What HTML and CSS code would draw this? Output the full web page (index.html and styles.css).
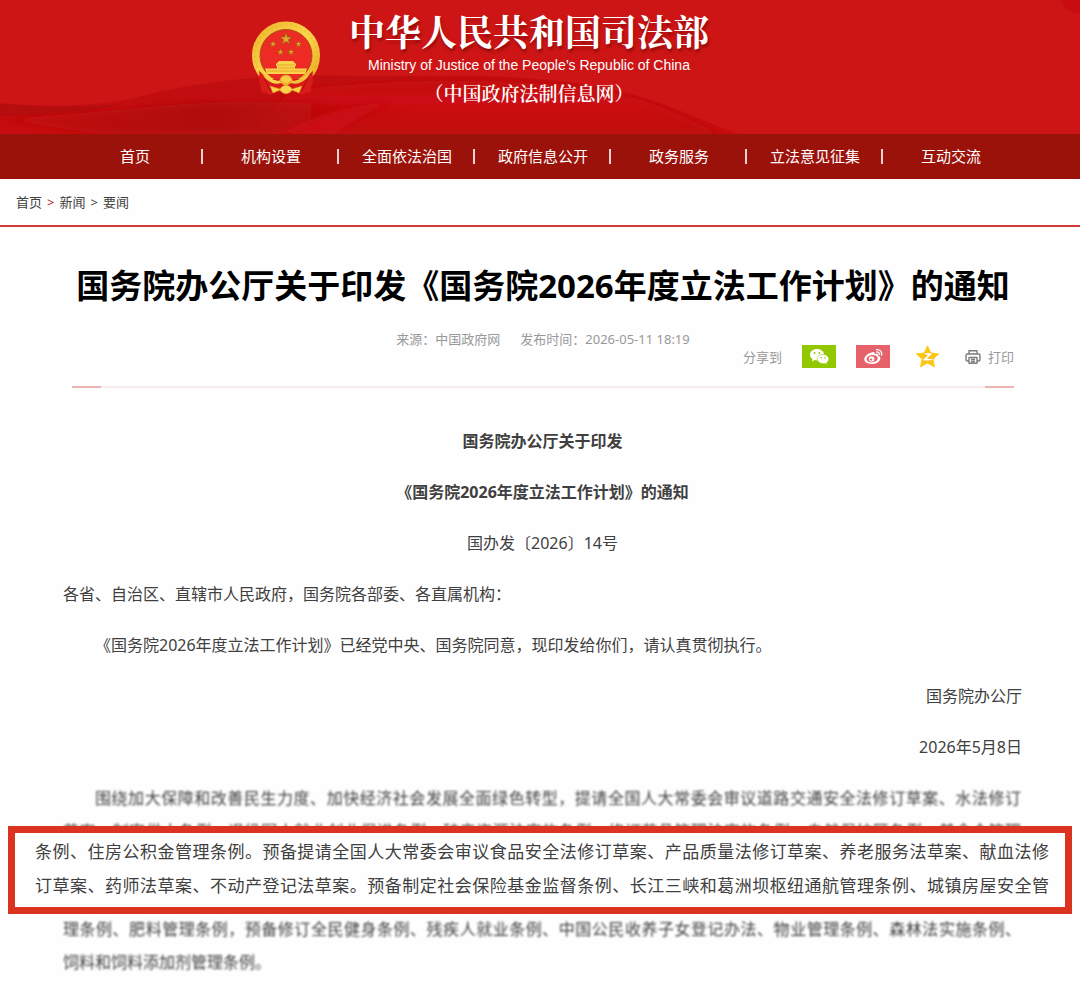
FILE: index.html
```html
<!DOCTYPE html>
<html lang="zh-CN">
<head>
<meta charset="utf-8">
<meta name="viewport" content="width=device-width, initial-scale=1">
<title>国务院办公厅关于印发《国务院2026年度立法工作计划》的通知</title>
<link rel="stylesheet" href="styles.css">
</head>
<body>
<header class="banner">
  <svg class="banner-waves" viewBox="0 0 1080 134" preserveAspectRatio="none" aria-hidden="true">
    <defs>
      <linearGradient id="wave" x1="0" y1="0" x2="0" y2="1">
        <stop offset="0" stop-color="#bf0e11"/>
        <stop offset="1" stop-color="#c60c0e"/>
      </linearGradient>
      <linearGradient id="fold" x1="0" y1="0" x2="1" y2="0">
        <stop offset="0" stop-color="#c30c0f"/>
        <stop offset="0.5" stop-color="#b00d0c"/>
        <stop offset="1" stop-color="#b80c0d" stop-opacity="0"/>
      </linearGradient>
      <linearGradient id="sheen" x1="0" y1="0" x2="0" y2="1">
        <stop offset="0" stop-color="#c50e11"/>
        <stop offset="0.4" stop-color="#cc0f12"/>
        <stop offset="1" stop-color="#c00b0d"/>
      </linearGradient>
      <filter id="soft"><feGaussianBlur stdDeviation="3"/></filter>
    </defs>
    <path d="M0 103C60 108 105 106 150 94C215 78 290 73 370 76H485C560 78 620 88 660 103C690 114 715 126 740 134H0Z" fill="url(#wave)"/>
    <path d="M0 104C50 107 90 107 120 104C90 114 40 116 0 116Z" fill="#b40e0f"/>
    <path d="M290 92C350 82 420 81 480 81C560 82 620 92 652 104C685 116 700 126 722 134H250Z" fill="url(#sheen)" filter="url(#soft)"/>
    <path d="M0 119C80 116 150 104 230 102C290 101 340 104 420 108C380 118 330 126 280 134H100Z" fill="url(#fold)" filter="url(#soft)"/>
    <path d="M280 134C310 118 340 106 390 102C360 116 345 126 335 134Z" fill="#cb1012" filter="url(#soft)"/>
    <path d="M1060 0C1066 9 1070 13 1080 14V0Z" fill="#c90c0f"/>
  </svg>
  <div class="brand">
    <svg class="emblem" viewBox="0 0 70 76" role="img" aria-label="国徽">
      <defs>
        <linearGradient id="gold" x1="0" y1="0" x2="1" y2="1">
          <stop offset="0" stop-color="#efb52d"/>
          <stop offset="0.5" stop-color="#fbd64c"/>
          <stop offset="1" stop-color="#e9a722"/>
        </linearGradient>
        <path id="star" d="M0-6.5 1.5-2H6.2L2.4.8 3.8 5.3 0 2.5-3.8 5.3-2.4.8-6.2-2H-1.5Z"/>
      </defs>
      <circle cx="35" cy="34.500" r="30" fill="#ed2a24" stroke="url(#gold)" stroke-width="8"/>
      <circle cx="35" cy="34.500" r="26" fill="none" stroke="#a95213" stroke-width="1"/>
      <circle cx="35" cy="34.500" r="31" fill="none" stroke="#e3a52c" stroke-width="2" stroke-dasharray="2 3" opacity="0.35"/>
      <g fill="#e2a52c" stroke="#91590e" stroke-width="0.700">
        <use href="#star" x="35" y="18"/>
        <use href="#star" transform="translate(22 23) scale(.55)"/>
        <use href="#star" transform="translate(47.500 23) scale(.55)"/>
        <use href="#star" transform="translate(29.500 31) scale(.55)"/>
        <use href="#star" transform="translate(40 31) scale(.55)"/>
      </g>
      <path d="M28 40H42L45 43V45H44V47.500H56L54 53H16L14 47.500H26V45H25V43Z" fill="#fbd24b"/>
      <path d="M26 44H44M16 50H54M27 47H43" stroke="#e09a22" stroke-width="0.800"/>
      <path d="M8 50C9 57 7 61 10 66 9 70 12 73 15 71 17 75 21 74 24 71H46C49 74 53 75 55 71 58 73 61 70 60 66 63 61 61 57 62 50L52 58H18Z" fill="#d91c1a"/>
      <path d="M13 58C17 62 16 66 20 70M57 58C53 62 54 66 50 70" fill="none" stroke="#a90e10" stroke-width="1"/>
      <path d="M9 49C14 55 21 59 28 60C30 54 40 54 42 60C49 59 56 55 61 49L56 57C51 62 45 64 40 62L35 65 30 62C25 64 19 62 14 57Z" fill="url(#gold)"/>
      <path d="M16 53H54L47 57 42 58C39 54 31 54 28 58L23 57Z" fill="#ed2a24"/>
      <path d="M29 60C29 56 32 54 35 54S41 56 41 60L35 63Z" fill="#f9cb43" stroke="#d78a1b" stroke-width="0.700"/>
      <path d="M19 65 29 68C32 63 38 63 41 68L51 65 48 72 41 69C38 74 32 74 29 69L22 72Z" fill="#fbd24b" stroke="#d9901d" stroke-width="0.500"/>
    </svg>
    <div class="brand-text">
      <div class="brand-name">中华人民共和国司法部</div>
      <div class="brand-en">Ministry of Justice of the People’s Republic of China</div>
      <div class="brand-sub">（中国政府法制信息网）</div>
    </div>
  </div>
</header>
<nav class="nav" aria-label="主导航">
  <a href="#">首页</a>
  <a href="#">机构设置</a>
  <a href="#">全面依法治国</a>
  <a href="#">政府信息公开</a>
  <a href="#">政务服务</a>
  <a href="#">立法意见征集</a>
  <a href="#">互动交流</a>
</nav>
<nav class="crumbs" aria-label="当前位置">
  <a href="#">首页</a><span class="crumb-mark">&gt;</span><a href="#">新闻</a><span>&gt;</span><a href="#">要闻</a>
</nav>
<main>
  <div class="article-head">
    <h1>国务院办公厅关于印发《国务院2026年度立法工作计划》的通知</h1>
    <div class="meta-row">
      <div class="meta"><span>来源：中国政府网</span><span>发布时间：2026-05-11 18:19</span></div>
      <div class="share">
        <span>分享到</span>
        <button class="tile wechat" type="button" aria-label="微信">
          <svg viewBox="0 0 34 23"><g fill="#fff"><path d="M15 4C10.900 4 8 6.600 8 9.800c0 1.800 1 3.300 2.500 4.300L10 16.500l2.600-1.400c.8.200 1.600.3 2.500.3 4 0 7-2.500 7-5.700C22 6.600 19 4 15 4Z"/><path d="M21 9.500c-3.300 0-5.700 2-5.700 4.600s2.400 4.600 5.700 4.600c.7 0 1.400-.1 2-.3l2.200 1.100-.5-1.900c1.400-.8 2.100-2.100 2.100-3.500 0-2.600-2.400-4.600-5.800-4.600Z" stroke="#92c800" stroke-width=".6"/></g><g fill="#92c800"><circle cx="12.500" cy="8" r="1"/><circle cx="17.300" cy="8" r="1"/><circle cx="19.200" cy="12.700" r=".8"/><circle cx="23" cy="12.700" r=".8"/></g></svg>
        </button>
        <button class="tile weibo" type="button" aria-label="微博">
          <svg viewBox="0 0 34 23"><path d="M15.500 7.500c1.500-.7 3.500-.8 3.300 1.500 2-.6 3.800-.3 3.200 1.800 1.600.5 2.700 1.400 2.300 3.200-.6 3-4.500 5-8.600 5-4.200 0-7.400-1.900-7.400-4.700 0-2.600 3.500-6.100 7.200-6.800Z" fill="#fff"/><ellipse cx="16.200" cy="13.700" rx="5.600" ry="3.700" fill="#e6626b" transform="rotate(-8 16 14)"/><circle cx="15.600" cy="14" r="2.800" fill="#fff"/><circle cx="15" cy="14.600" r="1.100" fill="#e6626b"/><path d="M20.500 4.700c3.400-.5 5.700 2 5 5.300M20.800 7c1.800-.1 2.700 1 2.400 2.600" fill="none" stroke="#fff" stroke-width="1.300" stroke-linecap="round"/></svg>
        </button>
        <button class="plain qzone" type="button" aria-label="QQ空间">
          <svg viewBox="0 0 24 23"><path d="M12 .5 15.300 7.800 23.500 8.800 17.500 14.200 19.200 22.300 12 18.200 4.800 22.300 6.500 14.200.5 8.800 8.700 7.800Z" fill="#fdc80b" stroke="#fdc80b" stroke-width="1" stroke-linejoin="round"/><path d="M7 8.400C11 7.300 14 7.400 17.500 8.400L12 13.400C14.500 14 17 13.900 20 13 16 16.200 11.500 16.600 6.500 15.400L12 10.400C10.500 9.900 9 9.300 7 8.400Z" fill="#fff" stroke="#ef9c10" stroke-width=".4"/></svg>
        </button>
        <button class="plain print" type="button">
          <svg viewBox="0 0 16 16" fill="none" stroke="#7c7c7c" stroke-width="1.400" stroke-linejoin="round"><path d="M4 5V1.700H12V5M4 12H2.500Q1 12 1 10.500V6.500Q1 5 2.500 5H13.500Q15 5 15 6.500V10.500Q15 12 13.500 12H12"/><path d="M4 8.500H12V14.300H4ZM6 10.500H10M6 12.500H10"/></svg>
          <span>打印</span>
        </button>
      </div>
    </div>
    <div class="rule"></div>
  </div>
  <article class="doc">
    <p class="center strong">国务院办公厅关于印发</p>
    <p class="center strong">《国务院2026年度立法工作计划》的通知</p>
    <p class="center number">国办发〔2026〕14号</p>
    <p>各省、自治区、直辖市人民政府，国务院各部委、各直属机构：</p>
    <p class="indent">《国务院2026年度立法工作计划》已经党中央、国务院同意，现印发给你们，请认真贯彻执行。</p>
    <p class="right">国务院办公厅</p>
    <p class="right">2026年5月8日</p>
  </article>
  <section class="excerpt">
    <p class="faded indent full">围绕加大保障和改善民生力度、加快经济社会发展全面绿色转型，提请全国人大常委会审议道路交通安全法修订草案、水法修订<br>草案、制定供水条例、退役军人就业创业促进条例、矿产资源法实施条例、修订药品管理法实施条例、自然保护区条例、基金会管理</p>
    <p class="highlight full">条例、住房公积金管理条例。预备提请全国人大常委会审议食品安全法修订草案、产品质量法修订草案、养老服务法草案、献血法修<br>订草案、药师法草案、不动产登记法草案。预备制定社会保险基金监督条例、长江三峡和葛洲坝枢纽通航管理条例、城镇房屋安全管</p>
    <p class="faded full">理条例、肥料管理条例，预备修订全民健身条例、残疾人就业条例、中国公民收养子女登记办法、物业管理条例、森林法实施条例、</p>
    <p class="faded">饲料和饲料添加剂管理条例。</p>
  </section>
</main>
</body>
</html>
```
FILE: styles.css
```css
* { box-sizing: border-box; }

body {
  margin: 0;
  background: #fefefe;
  color: #404040;
  font: 16px/24px "Noto Sans", "Noto Sans CJK SC", sans-serif;
}

h1, p { margin: 0; }
a { color: inherit; text-decoration: none; }

button {
  padding: 0;
  border: 0;
  background: none;
  color: inherit;
  font: inherit;
  cursor: pointer;
}

svg { display: block; }

.banner {
  position: relative;
  min-height: 134px;
  background: #ce1515;
  color: #fff;
}

.banner-waves {
  position: absolute;
  inset: 0;
  width: 100%;
  height: 100%;
}

.brand {
  position: relative;
  display: flex;
  justify-content: center;
  gap: 28px;
  padding: 8px 120px 0 0;
}

.emblem {
  width: 70px;
  height: 76px;
  margin-top: 13px;
}

.brand-text { text-align: center; }

.brand-name {
  font: bold 36px/46px "Noto Serif CJK SC", "Noto Sans CJK SC", serif;
  text-shadow: 1px 3px 3px rgba(90, 0, 0, 0.5);
}

.brand-en { font: 14px/22px "Liberation Sans", Arial, sans-serif; }

.brand-sub {
  padding-top: 4px;
  font: 600 19px/26px "Noto Serif CJK SC", "Noto Sans CJK SC", serif;
}

.nav {
  display: grid;
  grid-template-columns: repeat(7, 1fr);
  padding: 0 61px 0 67px;
  background: #9b120a;
  color: #fff;
  font-size: 15px;
  line-height: 45px;
  text-align: center;
}

.nav a {
  background: linear-gradient(#eed0ce, #eed0ce) right center / 2px 15px no-repeat;
  white-space: nowrap;
}

.nav a:last-child { background: none; }

.crumbs {
  display: flex;
  gap: 5px;
  padding: 0 16px;
  border-bottom: 2px solid #d23a38;
  font-size: 13px;
  line-height: 46px;
}

.crumb-mark { color: #b8231f; }

.article-head { padding: 35px 66px 0 72px; }

h1 {
  color: #000;
  font-size: 33px;
  line-height: 48px;
  text-align: center;
}

.meta-row {
  display: grid;
  grid-template-columns: 1fr auto 1fr;
  align-items: start;
  padding-top: 19px;
  color: #999;
  font-size: 13px;
  line-height: 20px;
}

.meta {
  display: flex;
  grid-column: 2;
  gap: 20px;
}

.share {
  display: flex;
  justify-content: flex-end;
  align-items: center;
  padding-top: 16px;
  white-space: nowrap;
}

.tile {
  width: 34px;
  height: 23px;
  margin-left: 20px;
}

.wechat { background: #92c800; }
.weibo { background: #e6626b; }
.plain { margin-left: 26px; }
.qzone svg { width: 23px; height: 23px; }

.print {
  display: flex;
  align-items: center;
  gap: 7px;
}

.print svg { width: 16px; height: 16px; }

.rule {
  height: 2px;
  margin-top: 18px;
  background: linear-gradient(to right, #ebb5b3 29px, #f8eded 29px, #f8eded calc(100% - 29px), #ebb5b3 calc(100% - 29px));
}

.doc {
  padding: 28px 58px 0 63px;
  line-height: 51px;
}

.center { text-align: center; }
.strong { font-weight: bold; }
.indent { text-indent: 2em; }
.right { text-align: right; }

.number { font-family: "Noto Sans", KaiTi, "Noto Sans CJK SC", sans-serif; }

.excerpt {
  padding: 9px 8px;
  line-height: 33px;
}

.faded {
  padding: 0 51px 0 55px;
  filter: blur(1px);
}

.full {
  text-align: justify;
  text-align-last: justify;
}

.highlight {
  position: relative;
  z-index: 1;
  margin: -22px 0 -1px;
  padding: 2px 16px 4px 20px;
  border: 7px solid #dc3220;
  background: #fefefe;
  font-size: 17px;
  line-height: 34px;
}
```
